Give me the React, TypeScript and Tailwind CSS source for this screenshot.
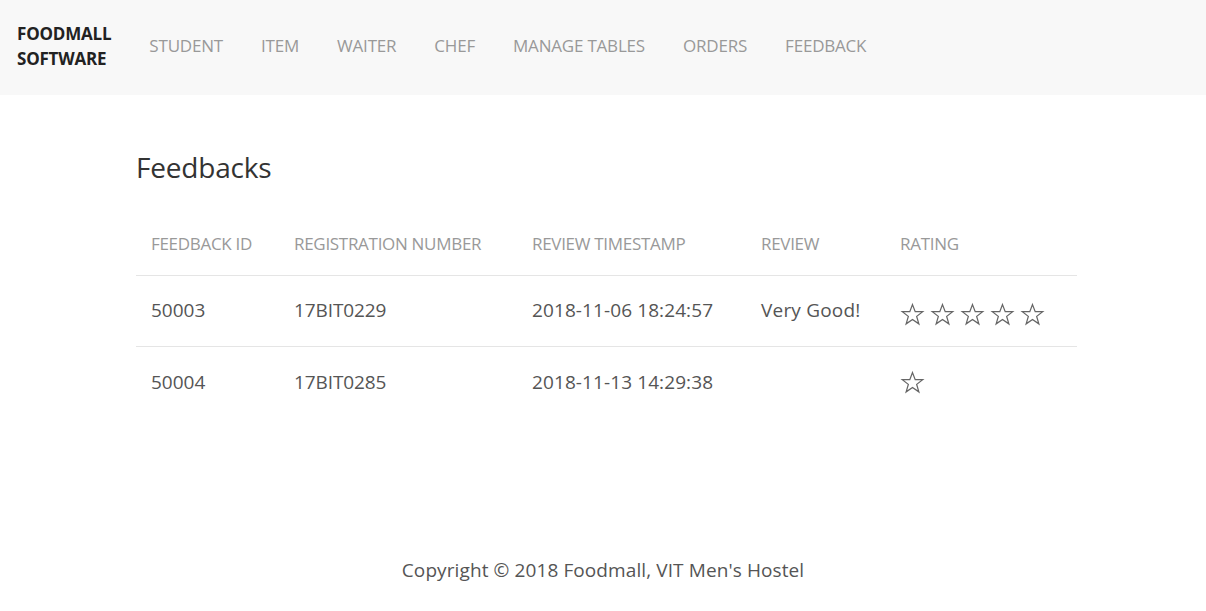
import React from 'react';

const NAV = ['STUDENT', 'ITEM', 'WAITER', 'CHEF', 'MANAGE TABLES', 'ORDERS', 'FEEDBACK'];

const ROWS = [
  { id: '50003', reg: '17BIT0229', ts: '2018-11-06 18:24:57', review: 'Very Good!', rating: 5 },
  { id: '50004', reg: '17BIT0285', ts: '2018-11-13 14:29:38', review: '', rating: 1 },
];

function Star() {
  return (
    <svg width="25" height="25" viewBox="0 0 24 24" fill="none" stroke="#666" strokeWidth="1.2" strokeLinejoin="miter">
      <polygon points="12,2.5 14.6,9.3 21.8,9.3 16,13.8 18.1,21 12,16.7 5.9,21 8,13.8 2.2,9.3 9.4,9.3" />
    </svg>
  );
}

export default function App() {
  return (
    <div className="min-h-[611px] bg-white flex flex-col text-[#555]" style={{ fontFamily: '"Open Sans", "Noto Sans", sans-serif' }}>
      {/* Navbar */}
      <nav className="h-[95px] bg-[#f8f8f8] flex items-center pb-[4px]">
        <div className="pl-[17px] pr-[19px] text-[17px] font-bold leading-[25px] text-[#222] tracking-[-0.2px]">
          FOODMALL
          <br />
          SOFTWARE
        </div>
        <ul className="flex">
          {NAV.map((n) => (
            <li key={n} className="px-[19px] text-[17px] text-[#999] tracking-[-0.2px]">
              {n}
            </li>
          ))}
        </ul>
      </nav>

      {/* Content */}
      <main className="w-[941px] ml-[136px] pt-[52px]">
        <h1 className="text-[28px] leading-[40px] text-[#333] tracking-[-0.2px]">Feedbacks</h1>
        <table className="mt-[33px] w-full border-collapse text-[17px] tracking-[-0.3px]">
          <thead>
            <tr className="border-b border-[#e5e5e5]">
              <th className="w-[143px] h-[55px] pl-[15px] text-left font-normal text-[#999] align-top pt-[11px]">FEEDBACK ID</th>
              <th className="w-[238px] pl-[15px] text-left font-normal text-[#999] align-top pt-[11px]">REGISTRATION NUMBER</th>
              <th className="w-[229px] pl-[15px] text-left font-normal text-[#999] align-top pt-[11px]">REVIEW TIMESTAMP</th>
              <th className="w-[139px] pl-[15px] text-left font-normal text-[#999] align-top pt-[11px]">REVIEW</th>
              <th className="pl-[15px] text-left font-normal text-[#999] align-top pt-[11px]">RATING</th>
            </tr>
          </thead>
          <tbody>
            {ROWS.map((r, i) => (
              <tr key={r.id} className={i < ROWS.length - 1 ? 'border-b border-[#e5e5e5]' : ''}>
                <td className="h-[71px] pl-[15px] text-[19px] tracking-[0px]">{r.id}</td>
                <td className="pl-[15px] text-[19px] tracking-[-0.1px]">{r.reg}</td>
                <td className="pl-[15px] text-[19px] tracking-[0.1px]">{r.ts}</td>
                <td className="pl-[15px] text-[19px] tracking-[0.2px]">{r.review}</td>
                <td className="pl-[15px]">
                  <div className={`flex gap-[5px] ${i === 0 ? 'pt-[7px]' : 'pt-[1px]'}`}>
                    {Array.from({ length: r.rating }).map((_, k) => (
                      <Star key={k} />
                    ))}
                  </div>
                </td>
              </tr>
            ))}
          </tbody>
        </table>
      </main>

      <footer className="mt-[139px] text-center text-[19px] tracking-[0.1px] text-[#555]">
        Copyright © 2018 Foodmall, VIT Men's Hostel
      </footer>
    </div>
  );
}
